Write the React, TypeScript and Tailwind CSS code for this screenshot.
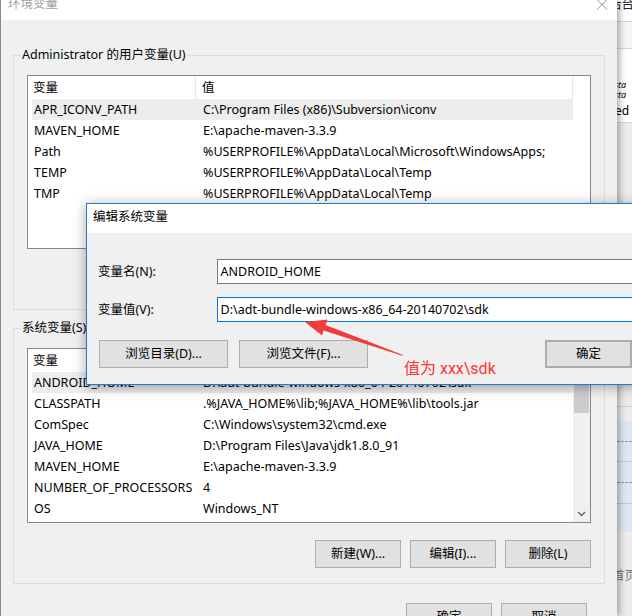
import React from "react";

const userVars: [string, string][] = [
  ["APR_ICONV_PATH", "C:\\Program Files (x86)\\Subversion\\iconv"],
  ["MAVEN_HOME", "E:\\apache-maven-3.3.9"],
  ["Path", "%USERPROFILE%\\AppData\\Local\\Microsoft\\WindowsApps;"],
  ["TEMP", "%USERPROFILE%\\AppData\\Local\\Temp"],
  ["TMP", "%USERPROFILE%\\AppData\\Local\\Temp"],
];

const sysVars: [string, string][] = [
  ["ANDROID_HOME", "D:\\adt-bundle-windows-x86_64-20140702\\sdk"],
  ["CLASSPATH", ".%JAVA_HOME%\\lib;%JAVA_HOME%\\lib\\tools.jar"],
  ["ComSpec", "C:\\Windows\\system32\\cmd.exe"],
  ["JAVA_HOME", "D:\\Program Files\\Java\\jdk1.8.0_91"],
  ["MAVEN_HOME", "E:\\apache-maven-3.3.9"],
  ["NUMBER_OF_PROCESSORS", "4"],
  ["OS", "Windows_NT"],
];

const Btn = ({
  children,
  className = "",
}: {
  children: React.ReactNode;
  className?: string;
}) => (
  <div
    className={`flex items-center justify-center h-[28px] bg-[#e1e1e1] border border-[#adadad] ${className}`}
  >
    {children}
  </div>
);

const Scrollbar = () => (
  <div className="ml-auto w-[17px] bg-[#f0f0f0] flex flex-col">
    <div className="h-[17px] flex items-center justify-center">
      <svg width="9" height="6" viewBox="0 0 9 6">
        <path d="M1 5 L4.5 1.5 L8 5" fill="none" stroke="#606060" strokeWidth="1.3" />
      </svg>
    </div>
    <div className="h-[47px] mx-[1px] bg-[#cdcdcd]" />
    <div className="flex-1" />
    <div className="h-[17px] flex items-center justify-center">
      <svg width="9" height="6" viewBox="0 0 9 6">
        <path d="M1 1 L4.5 4.5 L8 1" fill="none" stroke="#606060" strokeWidth="1.3" />
      </svg>
    </div>
  </div>
);

const VarList = ({
  rows,
  scroll,
  className,
}: {
  rows: [string, string][];
  scroll?: boolean;
  className: string;
}) => (
  <div className={`flex bg-white border border-[#828790] overflow-hidden ${className}`}>
    <div className="w-[545px] flex flex-col">
      <div className="flex h-[23px] shrink-0">
        <div className="w-[168px] border-r border-[#e5e5e5] pl-[5px] flex items-center">
          变量
        </div>
        <div className="flex-1 border-r border-[#e5e5e5] pl-[6px] flex items-center">
          值
        </div>
      </div>
      {rows.map(([k, v], i) => (
        <div
          key={k + i}
          className={`ml-[4px] flex h-[21px] shrink-0 items-center whitespace-nowrap ${
            i === 0 ? "bg-[#ededed]" : ""
          }`}
        >
          <div className="w-[164px] pl-[2px] overflow-hidden">{k}</div>
          <div className="pl-[7px]">{v}</div>
        </div>
      ))}
    </div>
    {scroll && <Scrollbar />}
  </div>
);

const GroupBox = ({
  label,
  children,
  className = "",
}: {
  label: string;
  children: React.ReactNode;
  className?: string;
}) => (
  <fieldset className={`w-[592px] border border-[#dcdcdc] ${className}`}>
    <legend className="ml-[7px] px-[1px] leading-[16px]">{label}</legend>
    {children}
  </fieldset>
);

export default function App() {
  return (
    <div className="relative w-[632px] h-[616px] overflow-hidden bg-[#ececec] text-[12.5px] leading-[16px] text-black font-['Noto_Sans','Noto_Sans_CJK_SC',sans-serif]">
      <div className="flex h-full">
        {/* main window */}
        <div className="relative z-10 w-[617px] h-full shrink-0 flex flex-col border-l border-[#8a8a8a] bg-[#f0f0f0] shadow-[3px_0_6px_rgba(0,0,0,0.3)]">
          <div className="h-[20px] shrink-0 bg-white flex items-start justify-between">
            <span className="-mt-[4px] ml-[7px] text-[#a0a0a0]">环境变量</span>
            <svg width="12" height="11" viewBox="0 0 12 11" className="mr-[9px] -mt-[1px]">
              <path d="M1 0.5 L11 10.5 M11 0.5 L1 10.5" stroke="#8c8c8c" strokeWidth="1" />
            </svg>
          </div>
          <div className="flex flex-col pl-[12px]">
            <GroupBox label="Administrator 的用户变量(U)" className="mt-[27px]">
              <div className="px-[13px] pt-[12px] pb-[18px]">
                <VarList rows={userVars} className="h-[174px]" />
                <div className="flex justify-end gap-[9px] mt-[14px]">
                  <Btn className="w-[86px]">新建(N)...</Btn>
                  <Btn className="w-[86px]">编辑(E)...</Btn>
                  <Btn className="w-[86px]">删除(D)</Btn>
                </div>
              </div>
            </GroupBox>
            <GroupBox label="系统变量(S)" className="mt-[10px]">
              <div className="px-[13px] pt-[12px] pb-[15px]">
                <VarList rows={sysVars} scroll className="h-[175px]" />
                <div className="flex justify-end gap-[9px] mt-[17px]">
                  <Btn className="w-[86px]">新建(W)...</Btn>
                  <Btn className="w-[86px]">编辑(I)...</Btn>
                  <Btn className="w-[86px]">删除(L)</Btn>
                </div>
              </div>
            </GroupBox>
            <div className="w-[592px] flex justify-end gap-[9px] pr-[18px] mt-[19px]">
              <Btn className="w-[86px]">确定</Btn>
              <Btn className="w-[86px]">取消</Btn>
            </div>
          </div>
        </div>

        {/* window behind, right edge */}
        <div className="w-[15px] flex flex-col shrink-0 overflow-hidden">
          <div className="h-[22px] shrink-0 bg-white border-b border-[#d5d5d5] overflow-hidden whitespace-nowrap">
            <span className="block -ml-[8px] -mt-[3px] text-[#222]">后台</span>
          </div>
          <div className="h-[27px] shrink-0 bg-[#f5f5f5] border-b border-[#d5d5d5]" />
          <div className="h-[74px] shrink-0 bg-white border-b border-[#d5d5d5] whitespace-nowrap pt-[31px] text-[9px] leading-[10px]">
            <div className="italic -ml-[3px]">sta</div>
            <div className="italic -ml-[3px]">sta</div>
            <div className="-ml-[2px] mt-[5px] text-[12px] leading-[12px]">ed</div>
          </div>
          <div className="h-[284px] shrink-0 bg-[#ececec] border-b border-[#cfcfcf]" />
          <div className="h-[14px] shrink-0 bg-[#ececec]" />
          <div className="h-[41px] shrink-0 bg-[#dde6f2] border-b border-[#c8c8c8] flex flex-col justify-center">
            <div className="border-t border-dashed border-[#9a9a9a]" />
          </div>
          <div className="h-[42px] shrink-0 bg-[#dde6f2] border-b border-[#c8c8c8] flex flex-col justify-center">
            <div className="border-t border-dashed border-[#9a9a9a]" />
          </div>
          <div className="h-[28px] shrink-0 bg-[#dde6f2]" />
          <div className="flex-1 bg-[#ececec] whitespace-nowrap pt-[36px]">
            <span className="block -ml-[5px] text-[#777]">首页</span>
          </div>
        </div>
      </div>

      {/* edit dialog */}
      <div className="absolute left-[86px] top-[203px] z-20 w-[560px] h-[182px] flex flex-col border border-[#1a7dd6] bg-[#f0f0f0] shadow-[0_2px_12px_rgba(0,0,0,0.35)]">
        <div className="h-[29px] shrink-0 bg-white pl-[6px] pt-[5px]">编辑系统变量</div>
        <div className="flex flex-col pl-[11px]">
          <div className="flex items-center mt-[26px]">
            <div className="w-[119px]">变量名(N):</div>
            <div className="h-[25px] w-[430px] bg-white border border-[#7a7a7a] flex items-center pl-[3px]">
              ANDROID_HOME
            </div>
          </div>
          <div className="flex items-center mt-[13px]">
            <div className="w-[119px]">变量值(V):</div>
            <div className="h-[25px] w-[430px] bg-white border border-[#0078d7] flex items-center pl-[3px]">
              D:\adt-bundle-windows-x86_64-20140702\sdk
            </div>
          </div>
          <div className="flex mt-[18px]">
            <Btn className="w-[129px] ml-[1px]">浏览目录(D)...</Btn>
            <Btn className="w-[129px] ml-[11px]">浏览文件(F)...</Btn>
            <Btn className="w-[87px] ml-[177px] border-2 border-[#0078d7]">确定</Btn>
          </div>
        </div>
      </div>

      {/* annotation */}
      <svg
        className="absolute left-[300px] top-[310px] z-30"
        width="104"
        height="47"
        viewBox="0 0 104 47"
      >
        <polygon
          points="5,12 27.6,9.5 25.6,15 103,45 102.4,45.8 23.5,20.5 22,25.5"
          fill="#f03c3c"
        />
      </svg>
      <div className="absolute left-[404px] top-[359px] z-30 text-[16px] leading-[20px] text-[#ff3434] whitespace-nowrap font-['Roboto','Noto_Sans_CJK_SC',sans-serif]">
        值为 xxx\sdk
      </div>
    </div>
  );
}
